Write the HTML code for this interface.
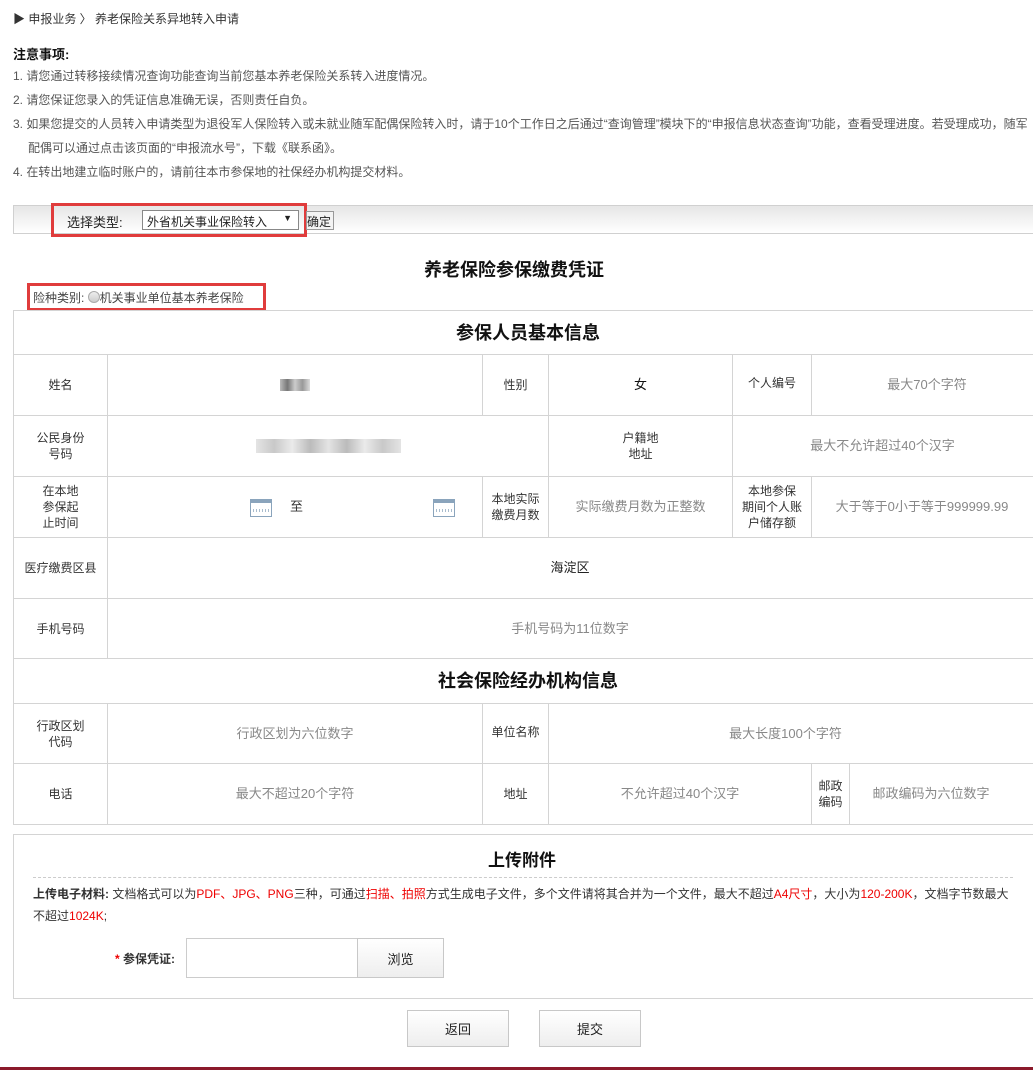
<!DOCTYPE html>
<html><head><meta charset="utf-8"><style>
*{margin:0;padding:0;box-sizing:border-box}
body{width:1033px;height:1070px;background:#fff;font-family:"Liberation Sans","Noto Sans CJK SC",sans-serif;font-size:12px;color:#333;position:relative;overflow:hidden}
.a{position:absolute;white-space:nowrap}
.c{position:absolute;border:1px solid #d4d4d4;display:flex;align-items:center;justify-content:center;text-align:center;line-height:16px;font-size:12px;color:#333}
.p{color:#888;font-size:13px}
.n{color:#555;line-height:24px}
.r{color:#e00}
.btn{position:absolute;border:1px solid #c8c8c8;background:linear-gradient(#fff,#eee);display:flex;align-items:center;justify-content:center;font-size:13px;color:#222}
.cal{display:inline-block;width:22px;height:18px;border:1px solid #8aa4bc;border-top:4px solid #8aa4bc;background:repeating-linear-gradient(90deg,#fff 0 2px,#a9bccd 2px 3px);background-size:100% 3px;background-repeat:no-repeat;background-position:0 6px}
</style></head><body>
<div class="a" style="left:13px;top:10px;font-size:12px;color:#333">▶ 申报业务 〉 养老保险关系异地转入申请</div>
<div class="a" style="left:13px;top:44px;font-size:13px;font-weight:bold;color:#111">注意事项:</div>
<div class="a n" style="left:13px;top:64px">1. 请您通过转移接续情况查询功能查询当前您基本养老保险关系转入进度情况。</div>
<div class="a n" style="left:13px;top:88px">2. 请您保证您录入的凭证信息准确无误，否则责任自负。</div>
<div class="a n" style="left:13px;top:112px">3. 如果您提交的人员转入申请类型为退役军人保险转入或未就业随军配偶保险转入时，请于10个工作日之后通过“查询管理”模块下的“申报信息状态查询”功能，查看受理进度。若受理成功，随军</div>
<div class="a n" style="left:28px;top:136px">配偶可以通过点击该页面的“申报流水号”，下载《联系函》。</div>
<div class="a n" style="left:13px;top:160px">4. 在转出地建立临时账户的，请前往本市参保地的社保经办机构提交材料。</div>

<div class="a" style="left:13px;top:205px;width:1030px;height:29px;border:1px solid #d0d0d0;background:linear-gradient(#e6e6e6,#fff)"></div>
<div class="a" style="left:51px;top:203px;width:256px;height:34px;border:3px solid #e03c3c"></div>
<div class="a" style="left:67px;top:212px;font-size:13px;color:#222">选择类型:</div>
<div class="a" style="left:142px;top:210px;width:157px;height:20px;border:1px solid #888;background:#fff;font-size:12px;padding:2px 4px;color:#222">外省机关事业保险转入<span style="position:absolute;right:6px;top:2px;font-size:9px">▼</span></div>
<div class="a" style="left:306px;top:211px;width:28px;height:19px;border:1px solid #999;background:#f3f3f3;font-size:12px;padding:1px 0 0 0;color:#222">确定</div>

<div class="a" style="left:424px;top:256px;font-size:18px;font-weight:bold;color:#111">养老保险参保缴费凭证</div>
<div class="a" style="left:27px;top:283px;width:239px;height:28px;border:3px solid #e03c3c"></div>
<div class="a" style="left:33px;top:289px;font-size:12px;color:#444">险种类别: <span style="display:inline-block;width:12px;height:12px;border-radius:50%;border:1px solid #aaa;background:linear-gradient(#eee,#ccc);vertical-align:-1px"></span>机关事业单位基本养老保险</div>

<div class="c" style="left:13px;top:310px;width:1030px;height:45px;font-size:18px;font-weight:bold;color:#111">参保人员基本信息</div>
<div class="c" style="left:13px;top:354px;width:95px;height:62px">姓名</div>
<div class="c" style="left:107px;top:354px;width:376px;height:62px"><span style="display:inline-block;width:30px;height:12px;background:linear-gradient(90deg,#bbb,#777,#ccc,#999,#ddd)"></span></div>
<div class="c" style="left:482px;top:354px;width:67px;height:62px">性别</div>
<div class="c" style="left:548px;top:354px;width:185px;height:62px;font-size:13px;color:#111">女</div>
<div class="c" style="left:732px;top:354px;width:80px;height:62px;align-items:flex-start;padding-top:20px">个人编号</div>
<div class="c p" style="left:811px;top:354px;width:232px;height:62px">最大70个字符</div>

<div class="c" style="left:13px;top:415px;width:95px;height:62px">公民身份<br>号码</div>
<div class="c" style="left:107px;top:415px;width:442px;height:62px"><span style="display:inline-block;width:145px;height:14px;background:linear-gradient(90deg,#ddd,#bbb,#e5e5e5,#aaa,#ddd,#aaa,#e5e5e5,#bbb,#ddd);opacity:.8"></span></div>
<div class="c" style="left:548px;top:415px;width:185px;height:62px">户籍地<br>地址</div>
<div class="c p" style="left:732px;top:415px;width:311px;height:62px;padding-right:10px">最大不允许超过40个汉字</div>

<div class="c" style="left:13px;top:476px;width:95px;height:62px">在本地<br>参保起<br>止时间</div>
<div class="c" style="left:107px;top:476px;width:376px;height:62px;justify-content:flex-start"><span class="cal" style="position:absolute;left:142px;top:22px"></span><span style="position:absolute;left:182px;top:22px;font-size:13px">至</span><span class="cal" style="position:absolute;left:325px;top:22px"></span></div>
<div class="c" style="left:482px;top:476px;width:67px;height:62px">本地实际<br>缴费月数</div>
<div class="c p" style="left:548px;top:476px;width:185px;height:62px">实际缴费月数为正整数</div>
<div class="c" style="left:732px;top:476px;width:80px;height:62px">本地参保<br>期间个人账<br>户储存额</div>
<div class="c p" style="left:811px;top:476px;width:232px;height:62px;padding-right:10px">大于等于0小于等于999999.99</div>

<div class="c" style="left:13px;top:537px;width:95px;height:62px">医疗缴费区县</div>
<div class="c" style="left:107px;top:537px;width:936px;height:62px;font-size:13px;color:#222;padding-right:10px">海淀区</div>
<div class="c" style="left:13px;top:598px;width:95px;height:61px">手机号码</div>
<div class="c p" style="left:107px;top:598px;width:936px;height:61px;padding-right:10px">手机号码为11位数字</div>

<div class="c" style="left:13px;top:658px;width:1030px;height:46px;font-size:18px;font-weight:bold;color:#111">社会保险经办机构信息</div>
<div class="c" style="left:13px;top:703px;width:95px;height:61px">行政区划<br>代码</div>
<div class="c p" style="left:107px;top:703px;width:376px;height:61px">行政区划为六位数字</div>
<div class="c" style="left:482px;top:703px;width:67px;height:61px;align-items:flex-start;padding-top:20px">单位名称</div>
<div class="c p" style="left:548px;top:703px;width:495px;height:61px;padding-right:20px">最大长度100个字符</div>
<div class="c" style="left:13px;top:763px;width:95px;height:62px">电话</div>
<div class="c p" style="left:107px;top:763px;width:376px;height:62px">最大不超过20个字符</div>
<div class="c" style="left:482px;top:763px;width:67px;height:62px">地址</div>
<div class="c p" style="left:548px;top:763px;width:264px;height:62px">不允许超过40个汉字</div>
<div class="c" style="left:811px;top:763px;width:39px;height:62px">邮政<br>编码</div>
<div class="c p" style="left:849px;top:763px;width:194px;height:62px;padding-right:30px">邮政编码为六位数字</div>

<div class="a" style="left:13px;top:834px;width:1030px;height:165px;border:1px solid #d4d4d4"></div>
<div class="a" style="left:488px;top:846px;font-size:17px;font-weight:bold;color:#111">上传附件</div>
<div class="a" style="left:33px;top:877px;width:980px;border-top:1px dashed #ccc"></div>
<div class="a" style="left:33px;top:882px;font-size:12px;color:#333;line-height:24px"><b>上传电子材料:</b> 文档格式可以为<span class="r">PDF、JPG、PNG</span>三种，可通过<span class="r">扫描、拍照</span>方式生成电子文件，多个文件请将其合并为一个文件，最大不超过<span class="r">A4尺寸</span>，大小为<span class="r">120-200K</span>，文档字节数最大</div>
<div class="a" style="left:33px;top:904px;font-size:12px;color:#333;line-height:24px">不超过<span class="r">1024K</span>;</div>
<div class="a" style="left:115px;top:950px;font-size:12px;font-weight:bold;color:#333"><span class="r">*</span> 参保凭证:</div>
<div class="a" style="left:186px;top:938px;width:172px;height:40px;border:1px solid #ccc;background:#fff"></div>
<div class="btn" style="left:357px;top:938px;width:87px;height:40px">浏览</div>

<div class="btn" style="left:407px;top:1010px;width:102px;height:37px">返回</div>
<div class="btn" style="left:539px;top:1010px;width:102px;height:37px">提交</div>
<div class="a" style="left:0;top:1067px;width:1033px;height:3px;background:#8b1a2b"></div>
</body></html>
